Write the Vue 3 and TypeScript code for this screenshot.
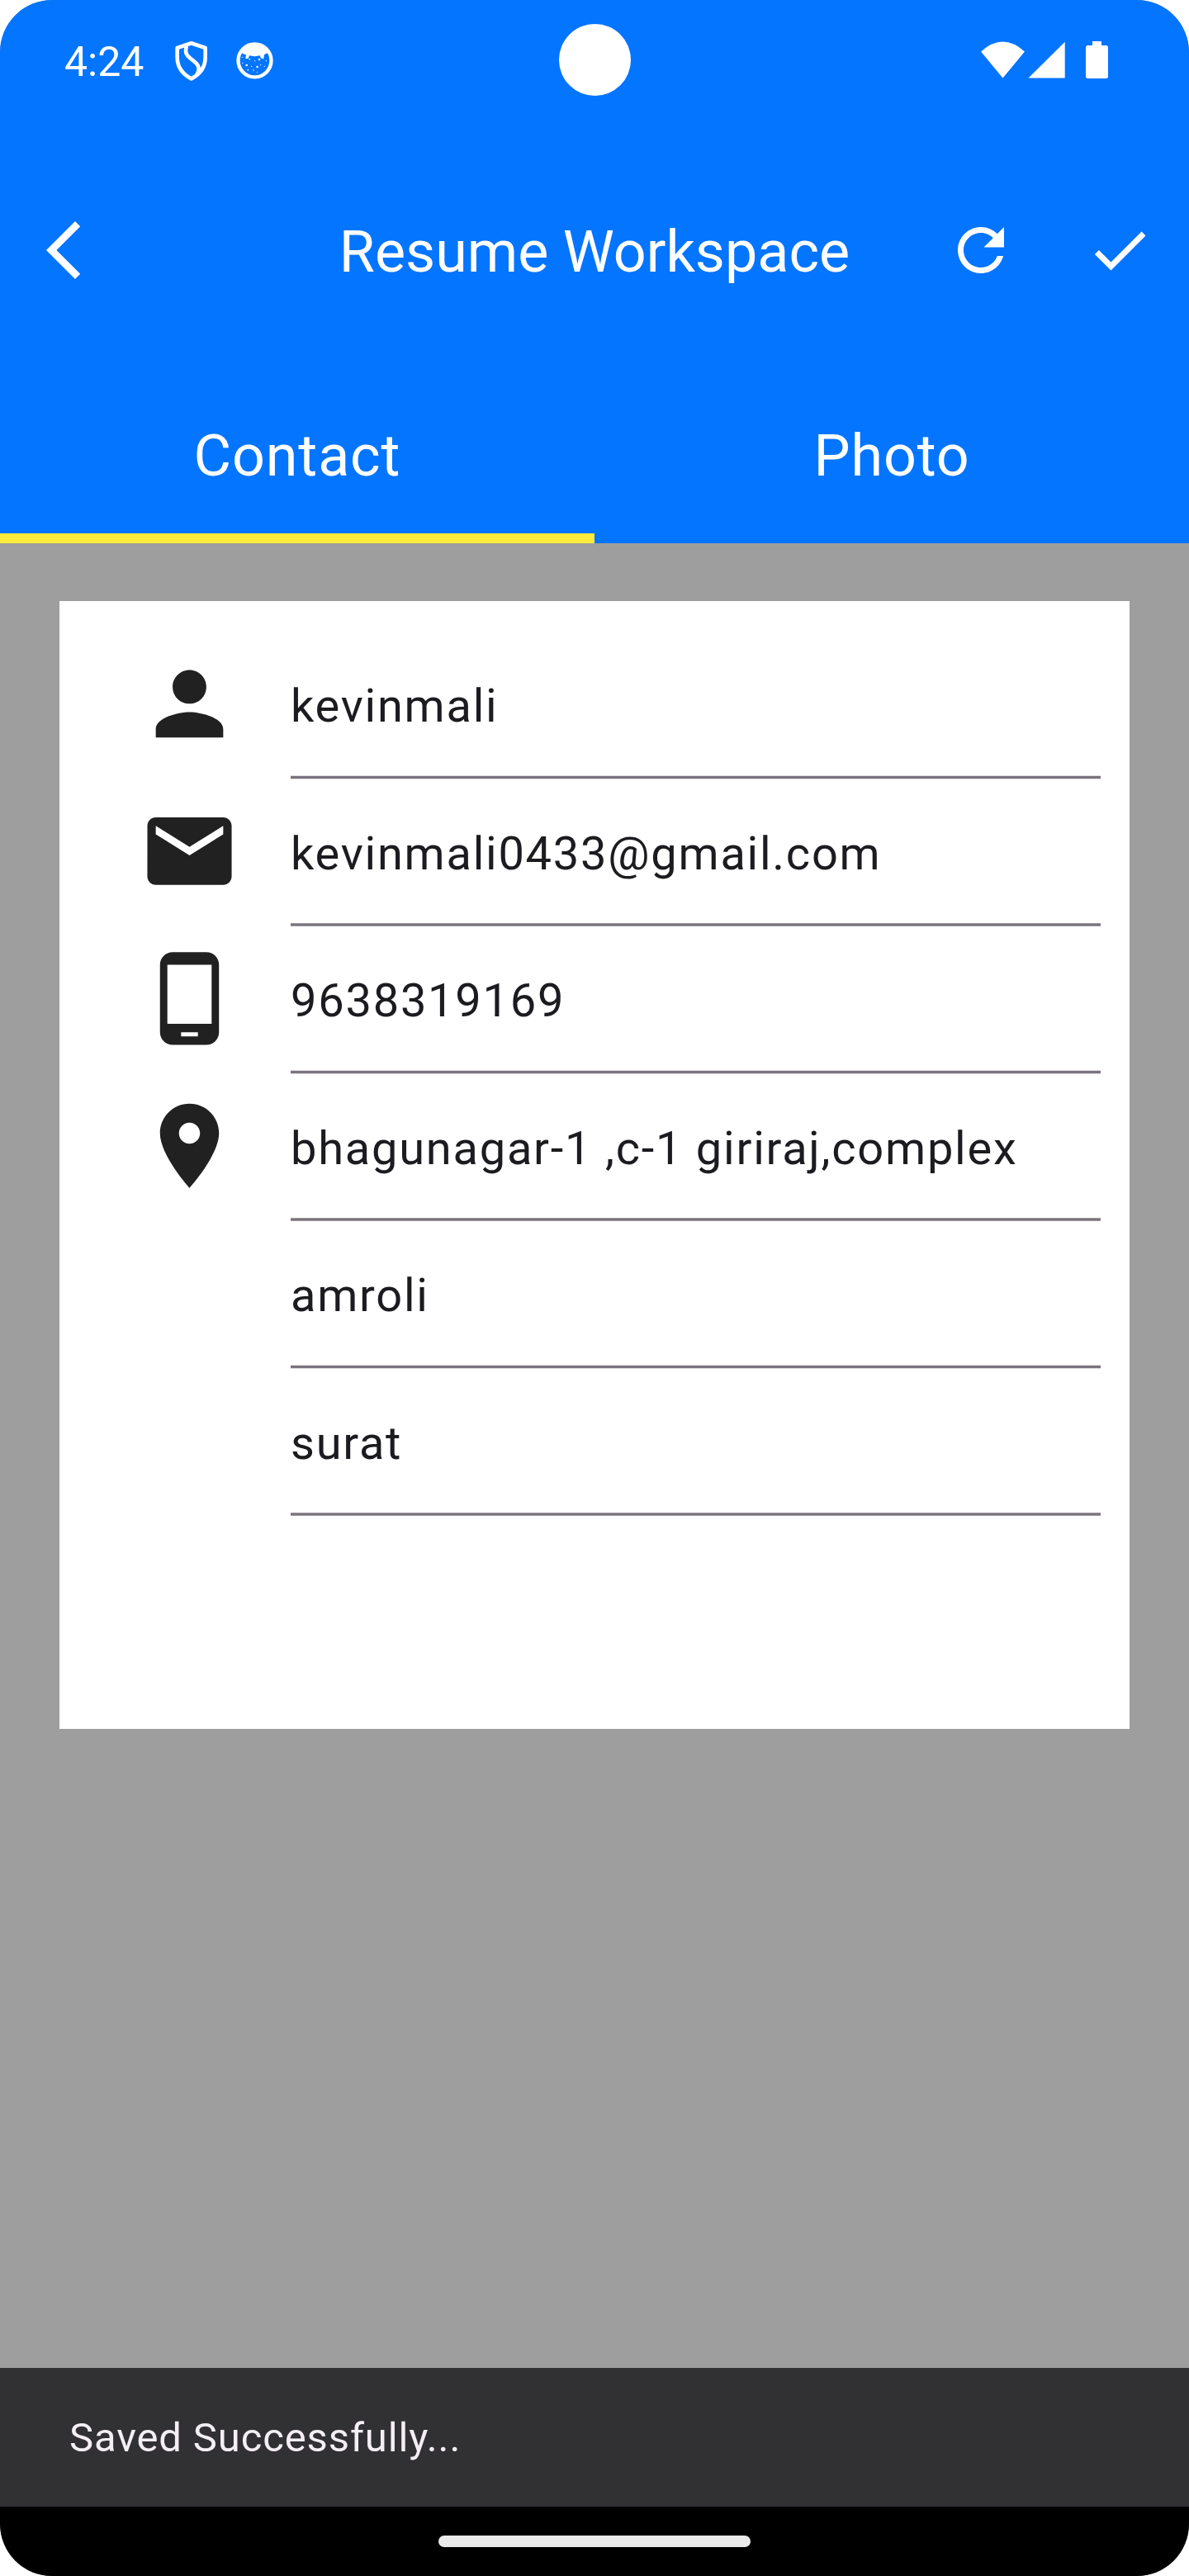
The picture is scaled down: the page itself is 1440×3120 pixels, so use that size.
<script setup lang="ts">
import { ref } from 'vue'

interface Field {
  value: string
  icon?: string
}

const fields: Field[] = [
  {
    value: 'kevinmali',
    icon: 'M12 12c2.21 0 4-1.79 4-4s-1.79-4-4-4-4 1.79-4 4 1.79 4 4 4zm0 2c-2.67 0-8 1.34-8 4v2h16v-2c0-2.66-5.33-4-8-4z',
  },
  {
    value: 'kevinmali0433@gmail.com',
    icon: 'M20 4H4c-1.1 0-1.99.9-1.99 2L2 18c0 1.1.9 2 2 2h16c1.1 0 2-.9 2-2V6c0-1.1-.9-2-2-2zm0 4l-8 5-8-5V6l8 5 8-5v2z',
  },
  {
    value: '9638319169',
    icon: 'M16 1H8C6.34 1 5 2.34 5 4v16c0 1.66 1.34 3 3 3h8c1.66 0 3-1.34 3-3V4c0-1.66-1.34-3-3-3zm-2 20h-4v-1h4v1zm3.25-3H6.75V4h10.5v14z',
  },
  {
    value: 'bhagunagar-1 ,c-1 giriraj,complex',
    icon: 'M12 2C8.13 2 5 5.13 5 9c0 5.25 7 13 7 13s7-7.75 7-13c0-3.87-3.13-7-7-7zm0 9.5c-1.38 0-2.5-1.12-2.5-2.5s1.12-2.5 2.5-2.5 2.5 1.12 2.5 2.5-1.12 2.5-2.5 2.5z',
  },
  { value: 'amroli' },
  { value: 'surat' },
]

const tabs = ['Contact', 'Photo']
const activeTab = ref(0)
</script>

<template>
  <div class="screen">
    <header class="header">
      <div class="status">
        <span class="clock">4:24</span>
        <svg class="shield" viewBox="633 147 126 150" fill="none" stroke="#fff" stroke-width="14" stroke-linejoin="round">
          <path d="M695 157 L644 174 V208 C644 245 666 271 695 286 C725 271 746 245 746 208 V174 Z" />
          <path d="M678 168 C670 191 678 203 699 218 C722 235 729 248 715 272" />
        </svg>
        <svg class="face" viewBox="855 150 141 141">
          <circle cx="925.500" cy="220" r="60" fill="none" stroke="#fff" stroke-width="13" />
          <path d="M872 186 Q925 130 979 186 L969 193 L959 198 L957 213 L949 211 L944 200 Q925 208 906 200 L901 212 L893 212 L895 198 L884 195 Z" fill="#fff" stroke="#fff" stroke-width="2" />
          <g fill="#fff">
            <circle cx="881" cy="208" r="2" /><circle cx="907" cy="215" r="2.500" />
            <circle cx="926" cy="221" r="2" /><circle cx="942" cy="216" r="4" />
            <circle cx="967" cy="221" r="2" /><circle cx="881" cy="229" r="2" />
            <circle cx="896" cy="237" r="4" /><circle cx="914" cy="241" r="2" />
            <circle cx="935" cy="243" r="4" /><circle cx="947" cy="236" r="2" />
            <circle cx="961" cy="241" r="2" /><circle cx="901" cy="254" r="2.500" />
            <circle cx="921" cy="255" r="2.500" /><circle cx="934" cy="262" r="2" />
          </g>
        </svg>
        <span class="camera"></span>
        <svg class="signals" viewBox="0 0 154 46" fill="#fff">
          <path d="M0 12.500 Q26.500 -11.500 53 12.500 L26.500 44.500 Z" />
          <path d="M57.500 44.500 L101.700 .7 V44.500 Z" />
          <path d="M135 0 h11 v5 h6.500 l1.500 1.500 v37 l-1.500 1.500 h-24 l-1.500 -1.500 v-37 l1.500 -1.500 h6.500 z" />
        </svg>
      </div>
      <div class="appbar">
        <svg class="icon" viewBox="0 0 24 24"><path d="M17.770 3.770 16 2 6 12l10 10 1.770-1.770L9.540 12z" /></svg>
        <h1 class="title">Resume Workspace</h1>
        <div class="actions">
          <svg class="icon" viewBox="0 0 24 24"><path d="M17.650 6.350C16.200 4.900 14.210 4 12 4c-4.420 0-7.990 3.580-7.990 8s3.570 8 7.990 8c3.730 0 6.840-2.550 7.730-6h-2.080c-.820 2.330-3.040 4-5.650 4-3.310 0-6-2.690-6-6s2.690-6 6-6c1.660 0 3.140.690 4.220 1.780L13 11h7V4l-2.350 2.350z" /></svg>
          <svg class="icon" viewBox="0 0 24 24"><path d="M9 16.170L4.830 12l-1.420 1.410L9 19 21 7l-1.410-1.410z" /></svg>
        </div>
      </div>
      <nav class="tabs">
        <div v-for="(tab, i) in tabs" :key="tab" class="tab" :class="{ active: i === activeTab }" @click="activeTab = i">
          {{ tab }}
        </div>
      </nav>
    </header>

    <main class="body">
      <section class="card">
        <div v-for="field in fields" :key="field.value" class="row">
          <div class="lead">
            <svg v-if="field.icon" class="lead-icon" viewBox="0 0 124 125">
              <path :d="field.icon" />
            </svg>
          </div>
          <div class="field">
            <div class="value">{{ field.value }}</div>
            <div class="line"></div>
          </div>
        </div>
      </section>
    </main>

    <div class="snackbar">Saved Successfully...</div>
    <footer class="navbar"><span class="pill"></span></footer>
  </div>
</template>

<style>
body {
  margin: 0;
  background: #fff;
}
</style>

<style scoped>
.screen {
  width: 1440px;
  height: 3120px;
  display: flex;
  flex-direction: column;
  overflow: hidden;
  border-radius: 63px;
  background: #9e9e9e;
  font-family: Roboto, "Liberation Sans", sans-serif;
  font-weight: 400;
}
.header {
  height: 658px;
  flex: none;
  display: flex;
  flex-direction: column;
  background: #0475ff;
  color: #fff;
}
.status {
  position: relative;
  height: 146px;
  display: flex;
  align-items: flex-start;
  padding: 0 98px 0 78px;
  box-sizing: border-box;
}
.clock {
  width: 133px;
  margin-top: 46px;
  font-size: 50px;
  line-height: 58px;
}
.shield {
  width: 42px;
  height: 50px;
  margin-top: 49px;
}
.face {
  width: 47px;
  height: 47px;
  margin: 50px 0 0 32px;
}
.camera {
  position: absolute;
  left: 677px;
  top: 29px;
  width: 87px;
  height: 87px;
  border-radius: 50%;
  background: #fff;
}
.signals {
  width: 154px;
  height: 46px;
  margin: 50px 0 0 auto;
}
.appbar {
  height: 314px;
  display: grid;
  grid-template-columns: 1fr auto 1fr;
  align-items: center;
  padding: 0 42px 0 35px;
}
.icon {
  width: 84px;
  height: 84px;
  display: block;
  fill: #fff;
}
.title {
  margin: 4px 0 0 7px;
  font-size: 70px;
  line-height: 82px;
  font-weight: 400;
  white-space: nowrap;
}
.actions {
  display: flex;
  justify-content: flex-end;
  gap: 84px;
}
.tabs {
  flex: 1;
  display: flex;
}
.tab {
  flex: 1;
  box-sizing: border-box;
  padding-top: 51px;
  text-align: center;
  font-size: 70px;
  line-height: 82px;
  letter-spacing: 0.875px;
  border-bottom: 12px solid transparent;
}
.tab.active {
  border-bottom-color: #ffeb3b;
}
.body {
  flex: 1;
  padding: 70px 72px 0;
}
.card {
  height: 1366px;
  box-sizing: border-box;
  padding: 37px 35px 0 96px;
  background: #fff;
}
.row {
  display: flex;
  height: 179px;
}
.row:nth-child(even) {
  height: 178px;
}
.lead {
  width: 184px;
  flex: none;
  padding-top: 25px;
}
.lead-icon {
  width: 124px;
  height: 125px;
  display: block;
  fill: #212121;
}
.lead-icon path {
  transform: translate(0.25px, 1.1px) scale(5.104);
}
.row:nth-child(even) .lead-icon path {
  transform: translate(0.25px, 0.6px) scale(5.104);
}
.field {
  flex: 1;
  display: flex;
  flex-direction: column;
  justify-content: space-between;
}
.value {
  padding-top: 57px;
  font-size: 56px;
  line-height: 66px;
  letter-spacing: 1.75px;
  color: #1c1b1f;
  white-space: nowrap;
}
/* 3.5px underline whose soft edge rows depend on the row's half-pixel offset */
.line {
  height: 3px;
  background: #79747e;
  border-top: 1px solid #dedcdf;
  border-bottom: 1px solid #dedcdf;
}
.row:nth-child(even) .line {
  height: 2px;
  border-color: #9b979e;
}
.snackbar {
  height: 168px;
  flex: none;
  box-sizing: border-box;
  padding: 56px 84px 0;
  background: #313033;
  color: #f4eff4;
  font-size: 49px;
  line-height: 58px;
  letter-spacing: 0.875px;
}
.navbar {
  height: 84px;
  flex: none;
  display: flex;
  justify-content: center;
  align-items: center;
  background: #000;
}
.pill {
  width: 378px;
  height: 14px;
  border-radius: 7px;
  background: #ebebeb;
}
</style>
